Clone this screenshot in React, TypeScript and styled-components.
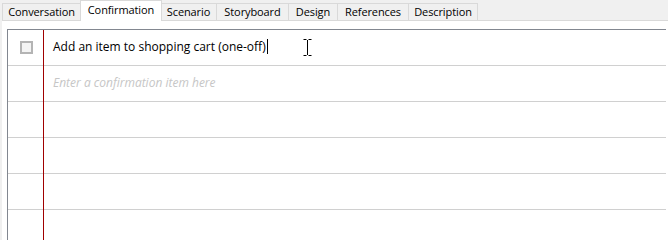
import styled, { createGlobalStyle } from 'styled-components';

const GlobalStyle = createGlobalStyle`
  html, body {
    margin: 0;
    padding: 0;
    background: #f0f0f0;
  }
  body {
    font-family: "Open Sans", "Noto Sans", "DejaVu Sans", sans-serif;
    font-size: 12px;
    color: #000;
  }
`;

const tabs = [
  { label: 'Conversation', width: 79 },
  { label: 'Confirmation', width: 80, active: true },
  { label: 'Scenario', width: 56 },
  { label: 'Storyboard', width: 72 },
  { label: 'Design', width: 49 },
  { label: 'References', width: 71 },
  { label: 'Description', width: 69 },
];

const items = ['Add an item to shopping cart (one-off)', '', '', '', '', ''];

const Window = styled.div`
  width: 668px;
  height: 240px;
  overflow: hidden;
  display: flex;
  flex-direction: column;
`;

const TabStrip = styled.div`
  display: flex;
  align-items: flex-end;
  height: 21px;
  padding-left: 2px;
  position: relative;
  z-index: 1;
`;

const Tab = styled.div<{ $active?: boolean; $w: number }>`
  box-sizing: border-box;
  width: ${(p) => (p.$active ? p.$w + 2 : p.$w)}px;
  height: ${(p) => (p.$active ? 21 : 18)}px;
  margin: ${(p) => (p.$active ? '0 -1px' : '0')};
  display: flex;
  align-items: center;
  justify-content: center;
  padding-bottom: ${(p) => (p.$active ? 4 : 1)}px;
  background: ${(p) => (p.$active ? '#fff' : '#f0f0f0')};
  border: 1px solid #d9d9d9;
  border-bottom: ${(p) => (p.$active ? 'none' : '1px solid #d9d9d9')};
  border-left-width: ${(p) => (p.$active ? 1 : 0)}px;
  &:first-child {
    border-left-width: 1px;
  }
  font-size: 11px;
  white-space: nowrap;
  position: relative;
  z-index: ${(p) => (p.$active ? 2 : 0)};
  letter-spacing: -0.1px;
`;

const Pane = styled.div`
  flex: 1;
  margin-left: 2px;
  margin-top: -1px;
  background: #fff;
  border-top: 1px solid #d9d9d9;
  padding: 8px 0 0 5px;
`;

const List = styled.div`
  height: 100%;
  border-top: 1px solid #828790;
  border-left: 1px solid #828790;
  box-sizing: border-box;
  margin-right: 2px;
`;

const Row = styled.div`
  display: grid;
  grid-template-columns: 35px 1px 1fr;
  height: 36px;
  border-bottom: 1px solid #d0d0d0;
  box-sizing: border-box;
`;

const CheckCell = styled.div`
  display: flex;
  align-items: center;
  justify-content: center;
  padding-left: 1px;
`;

const Check = styled.div`
  width: 13px;
  height: 13px;
  box-sizing: border-box;
  border: 2px solid #b4b4b4;
  background: #f4f4f4;
`;

const Margin = styled.div`
  background: #a00000;
  margin-bottom: -1px;
`;

const Text = styled.div<{ $placeholder?: boolean }>`
  display: flex;
  align-items: center;
  padding: 0 0 2px 9px;
  font-size: 12px;
  color: ${(p) => (p.$placeholder ? '#c6c6c6' : '#000')};
  font-style: ${(p) => (p.$placeholder ? 'italic' : 'normal')};
  position: relative;
`;

const Caret = styled.span`
  display: inline-block;
  width: 1px;
  height: 15px;
  background: #000;
  margin-left: 1px;
`;

const IBeam = () => (
  <svg width="9" height="17" viewBox="0 0 9 17" style={{ position: 'absolute', left: 259, top: 9 }}>
    <path d="M0.5 0.5h3M5.5 0.5h3M4.5 1v15M0.5 16.5h3M5.5 16.5h3" stroke="#000" strokeWidth="1" fill="none" />
  </svg>
);

export default function App() {
  return (
    <Window>
      <GlobalStyle />
      <TabStrip>
        {tabs.map((t) => (
          <Tab key={t.label} $active={t.active} $w={t.width}>
            {t.label}
          </Tab>
        ))}
      </TabStrip>
      <Pane>
        <List>
          {items.map((text, i) => (
            <Row key={i}>
              <CheckCell>{i === 0 && <Check />}</CheckCell>
              <Margin />
              {i === 0 ? (
                <Text>
                  {text}
                  <Caret />
                  <IBeam />
                </Text>
              ) : i === 1 ? (
                <Text $placeholder>Enter a confirmation item here</Text>
              ) : (
                <Text />
              )}
            </Row>
          ))}
        </List>
      </Pane>
    </Window>
  );
}
